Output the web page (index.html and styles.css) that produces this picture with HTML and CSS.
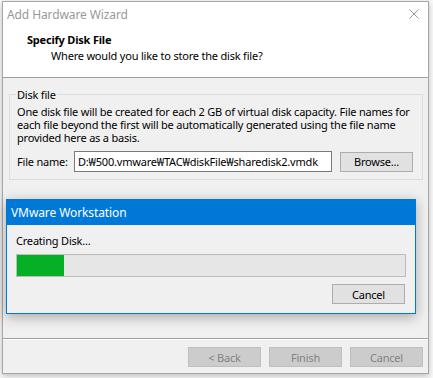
FILE: index.html
```html
<!DOCTYPE html>
<html lang="en">
<head>
    <meta charset="UTF-8">
    <meta name="viewport" content="width=device-width, initial-scale=1.0">
    <title>Add Hardware Wizard</title>
    <link rel="stylesheet" href="styles.css">
</head>
<body>
    <div class="wizard">
        <div class="titlebar">
            <span class="title">Add Hardware Wizard</span>
            <svg class="close" width="10" height="10" viewBox="0 0 10 10">
                <path d="M0.5 0.5 L9.5 9.5 M9.5 0.5 L0.5 9.5" stroke="#999" stroke-width="1" fill="none"/>
            </svg>
        </div>
        <div class="header">
            <h1>Specify Disk File</h1>
            <p>Where would you like to store the disk file?</p>
        </div>

        <div class="body">
            <fieldset class="group">
                <legend>Disk file</legend>
                <p class="info">One disk file will be created for each 2 GB of virtual disk capacity. File names for each file beyond the first will be automatically generated using the file name provided here as a basis.</p>
                <div class="file-row">
                    <label for="fileName">File name:</label>
                    <input type="text" id="fileName" value="D:₩500.vmware₩TAC₩diskFile₩sharedisk2.vmdk">
                    <button class="btn">Browse...</button>
                </div>
            </fieldset>
        </div>

        <div class="footer">
            <button class="btn" disabled>&lt; Back</button>
            <button class="btn" disabled>Finish</button>
            <button class="btn" disabled>Cancel</button>
        </div>
    </div>

    <!-- progress popup sits over the wizard -->
    <div class="progress-dialog">
        <div class="progress-title">VMware Workstation</div>
        <div class="progress-body">
            <div class="progress-label">Creating Disk...</div>
            <div class="progress-bar"><div class="progress-fill" style="width: 12%"></div></div>
            <div class="progress-actions">
                <button class="btn">Cancel</button>
            </div>
        </div>
    </div>
</body>
</html>
```

FILE: styles.css
```css
:root {
    --face: #f0f0f0;
    --accent: #0078d7;
    --text: #000;
    --disabled-text: #838383;
}

body {
    margin: 0;
    padding: 1px 0 0 2px;
    background: #fafafa;
    font-family: 'Noto Sans', sans-serif;
    font-size: 11px;
    letter-spacing: -0.2px;
    color: var(--text);
    width: 433px;
    height: 378px;
    overflow: hidden;
    box-sizing: border-box;
    position: relative;
}

.wizard {
    width: 427px;
    height: 373px;
    box-sizing: border-box;
    border: 1px solid #a6a6a6;
    background: var(--face);
    display: flex;
    flex-direction: column;
    box-shadow: 0 2px 6px rgba(0, 0, 0, 0.25);
}

.titlebar {
    height: 24px;
    background: #fff;
    display: flex;
    align-items: center;
    justify-content: space-between;
    padding: 0 9px 0 4px;
}

.title {
    color: #999;
    font-size: 12px;
    letter-spacing: -0.1px;
}

.header {
    background: #fff;
    height: 52px;
    border-bottom: 1px solid #a0a0a0;
    padding: 6px 0 0 24px;
    box-sizing: border-box;
}

.header h1 {
    margin: 0;
    font-size: 11px;
    font-weight: bold;
    line-height: 15px;
}

.header p {
    margin: 1px 0 0 24px;
    line-height: 15px;
}

.body {
    flex: 1;
    padding: 9px 5px 0 6px;
}

.group {
    margin: 0;
    padding: 3px 7px 7px 7px;
    border: 1px solid #dcdcdc;
    height: 93px;
    box-sizing: border-box;
}

.group legend {
    padding: 0 1px;
    margin-left: -1px;
    line-height: 15px;
}

.info {
    margin: 0;
    line-height: 13px;
}

.file-row {
    display: flex;
    align-items: center;
    margin-top: 7px;
}

.file-row label {
    width: 57px;
}

.file-row input {
    width: 258px;
    height: 21px;
    box-sizing: border-box;
    border: 1px solid #7a7a7a;
    background: #fff;
    font: inherit;
    letter-spacing: inherit;
    padding: 0 3px;
    margin-right: 8px;
}

.btn {
    width: 73px;
    height: 20px;
    box-sizing: border-box;
    border: 1px solid #adadad;
    background: #e1e1e1;
    font: inherit;
    letter-spacing: inherit;
    color: var(--text);
    padding: 0;
}

.btn:disabled {
    background: #cccccc;
    border-color: #bfbfbf;
    color: var(--disabled-text);
}

.footer {
    height: 35px;
    border-top: 1px solid #a0a0a0;
    box-shadow: inset 0 1px 0 #fff;
    display: flex;
    justify-content: flex-end;
    align-items: flex-start;
    gap: 8px;
    padding: 8px 5px 0 0;
    box-sizing: border-box;
}

.progress-dialog {
    position: absolute;
    left: 6px;
    top: 199px;
    width: 410px;
    height: 115px;
    box-sizing: border-box;
    border: 1px solid var(--accent);
    background: var(--face);
    box-shadow: 0 3px 12px rgba(0, 0, 0, 0.3);
    display: flex;
    flex-direction: column;
}

.progress-title {
    height: 25px;
    background: var(--accent);
    color: #fff;
    font-size: 12px;
    letter-spacing: -0.1px;
    line-height: 25px;
    padding-left: 4px;
}

.progress-body {
    padding: 8px 9px 0 9px;
}

.progress-label {
    line-height: 15px;
}

.progress-bar {
    margin-top: 6px;
    height: 23px;
    box-sizing: border-box;
    border: 1px solid #bcbcbc;
    background: #e6e6e6;
}

.progress-fill {
    height: 100%;
    background: #06b025;
}

.progress-actions {
    display: flex;
    justify-content: flex-end;
    margin-top: 7px;
}

.progress-actions .btn {
    margin-right: 1px;
}
```
